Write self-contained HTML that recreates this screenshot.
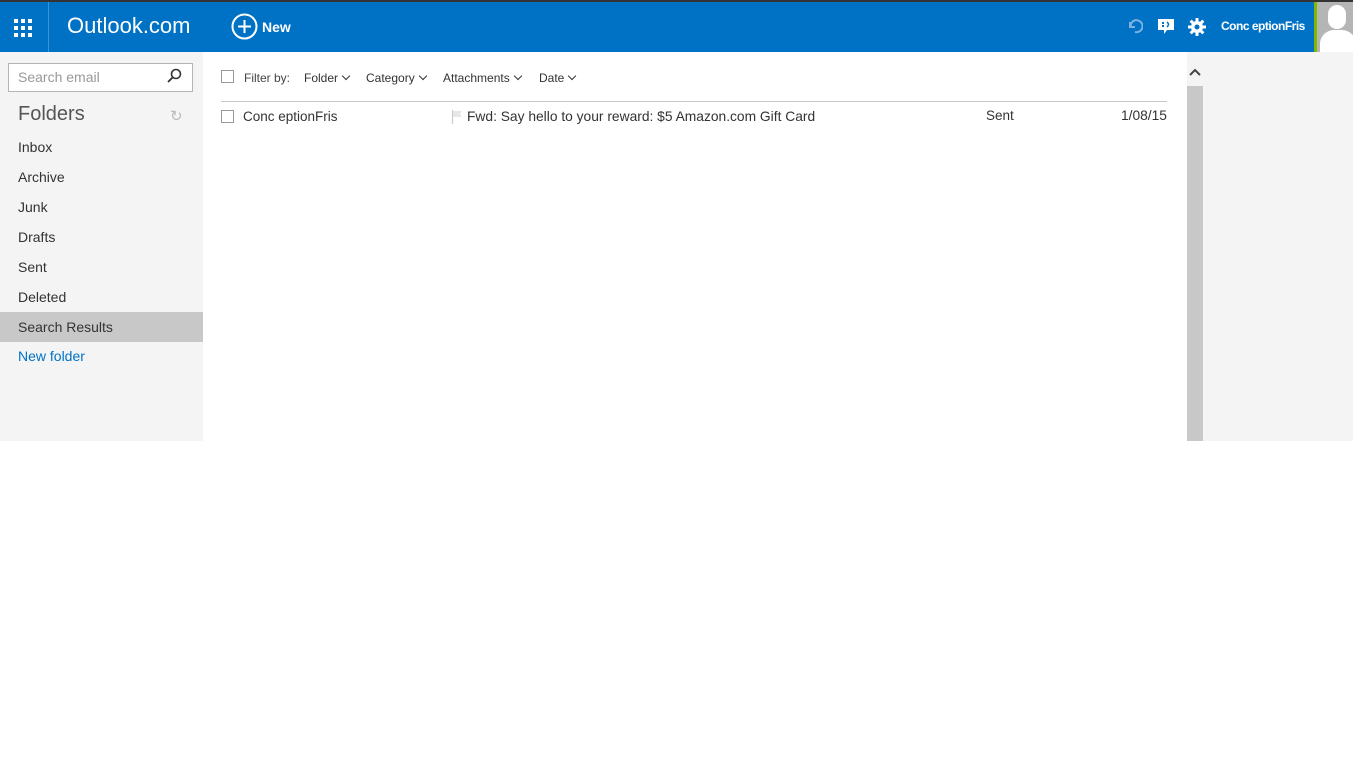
<!DOCTYPE html>
<html><head><style>
*{margin:0;padding:0;box-sizing:border-box}
body{width:1366px;height:768px;background:#fff;font-family:"Liberation Sans",sans-serif;position:relative;overflow:hidden;color:#333}
.a{position:absolute}
.top{left:0;top:0;width:1353px;height:2px;background:#333}
.bar{left:0;top:2px;width:1314px;height:50px;background:#0072c6}
.side{left:0;top:52px;width:203px;height:389px;background:#f4f4f4}
.right{left:1203px;top:52px;width:150px;height:389px;background:#f4f4f4}
.scroll{left:1187px;top:86px;width:16px;height:355px;background:#c8c8c8}
.fl{left:18px;font-size:14px;color:#333}
.ck{width:13px;height:13px;border:1px solid #999;background:#fff}
.dd{font-size:12px;color:#333;top:71px}
.dd:after{content:"";display:inline-block;width:5px;height:5px;border-right:1.5px solid #333;border-bottom:1.5px solid #333;transform:rotate(45deg);margin-left:5px;position:relative;top:-3px}
</style></head><body>
<div class="a top"></div>
<div class="a bar"></div>
<div class="a" style="left:14px;top:19px;width:18px;height:18px">
<svg width="18" height="18" fill="#fff"><rect x="0" y="0" width="4" height="4"/><rect x="7" y="0" width="4" height="4"/><rect x="14" y="0" width="4" height="4"/><rect x="0" y="7" width="4" height="4"/><rect x="7" y="7" width="4" height="4"/><rect x="14" y="7" width="4" height="4"/><rect x="0" y="14" width="4" height="4"/><rect x="7" y="14" width="4" height="4"/><rect x="14" y="14" width="4" height="4"/></svg></div>
<div class="a" style="left:48px;top:2px;width:1px;height:50px;background:#3a94d8"></div>
<div class="a" style="left:67px;top:13px;font-size:22px;color:#fff">Outlook.com</div>
<svg class="a" style="left:231px;top:13px" width="27" height="27"><circle cx="13.5" cy="13.5" r="12" fill="none" stroke="#fff" stroke-width="2"/><path d="M13.5 7v13M7 13.5h13" stroke="#fff" stroke-width="2"/></svg>
<div class="a" style="left:262px;top:19px;font-size:14px;font-weight:bold;color:#fff">New</div>
<svg class="a" style="left:1127px;top:18px" width="16" height="16"><path d="M3 4v5h5M3.5 8.5A6 6 0 1 1 8 14" fill="none" stroke="#7fb1e0" stroke-width="2"/></svg>
<svg class="a" style="left:1157px;top:18px" width="18" height="18"><path d="M1 1h16v11H10l-3 4v-4H1z" fill="#fff"/><rect x="5" y="4" width="2" height="2" fill="#0072c6"/><rect x="5" y="7" width="2" height="2" fill="#0072c6"/><path d="M10 4q3 2.5 0 5" stroke="#0072c6" fill="none" stroke-width="1.5"/></svg>
<svg class="a" style="left:1188px;top:18px" width="18" height="18" viewBox="0 0 18 18"><g fill="#fff"><circle cx="9" cy="9" r="6"/><rect x="7.5" y="0" width="3" height="18"/><rect x="0" y="7.5" width="18" height="3"/><rect x="7.5" y="0" width="3" height="18" transform="rotate(45 9 9)"/><rect x="7.5" y="0" width="3" height="18" transform="rotate(-45 9 9)"/></g><circle cx="9" cy="9" r="2.5" fill="#0072c6"/></svg>
<div class="a" style="left:1221px;top:19px;font-size:12px;font-weight:bold;color:#fff;letter-spacing:-0.5px">Conc eptionFris</div>
<div class="a" style="left:1314px;top:2px;width:3px;height:50px;background:#7fba00"></div>
<div class="a" style="left:1317px;top:2px;width:36px;height:50px;background:#b5b5b5;overflow:hidden">
<div class="a" style="left:11px;top:3px;width:18px;height:24px;border-radius:9px;background:#fff"></div>
<div class="a" style="left:3px;top:28px;width:36px;height:30px;border-radius:14px 14px 0 0;background:#fff"></div></div>
<div class="a side"></div>
<div class="a" style="left:8px;top:63px;width:185px;height:29px;border:1px solid #b5b5b5;background:#fff"></div>
<div class="a" style="left:18px;top:69px;font-size:14px;color:#999">Search email</div>
<svg class="a" style="left:166px;top:68px" width="16" height="16"><circle cx="10" cy="6" r="4.5" fill="none" stroke="#333" stroke-width="1.6"/><path d="M6.8 9.2L2 14" stroke="#333" stroke-width="1.8"/></svg>
<div class="a" style="left:18px;top:103px;font-size:20px;color:#555">Folders</div>
<div class="a" style="left:170px;top:107px;font-size:15px;color:#bbb">↻</div>
<div class="a fl" style="top:139px">Inbox</div>
<div class="a fl" style="top:169px">Archive</div>
<div class="a fl" style="top:199px">Junk</div>
<div class="a fl" style="top:229px">Drafts</div>
<div class="a fl" style="top:259px">Sent</div>
<div class="a fl" style="top:289px">Deleted</div>
<div class="a" style="left:0;top:312px;width:203px;height:30px;background:#c8c8c8"></div>
<div class="a fl" style="top:319px">Search Results</div>
<div class="a fl" style="top:348px;color:#0072c6">New folder</div>
<div class="a ck" style="left:221px;top:70px"></div>
<div class="a" style="left:244px;top:71px;font-size:12px;color:#444">Filter by:</div>
<div class="a dd" style="left:304px">Folder</div>
<div class="a dd" style="left:366px">Category</div>
<div class="a dd" style="left:443px">Attachments</div>
<div class="a dd" style="left:539px">Date</div>
<div class="a" style="left:221px;top:101px;width:946px;height:1px;background:#c8c8c8"></div>
<div class="a ck" style="left:221px;top:110px"></div>
<div class="a" style="left:243px;top:109px;font-size:13.5px">Conc eptionFris</div>
<svg class="a" style="left:451px;top:110px" width="12" height="14"><path d="M1.5 0v14" stroke="#ccc" stroke-width="1.2"/><path d="M2 1h9l-2 3 2 3H2z" fill="#e6e6e6"/></svg>
<div class="a" style="left:467px;top:109px;font-size:13.8px">Fwd: Say hello to your reward: $5 Amazon.com Gift Card</div>
<div class="a" style="left:986px;top:108px;font-size:13.5px">Sent</div>
<div class="a" style="left:1067px;width:100px;text-align:right;top:108px;font-size:13.8px">1/08/15</div>
<div class="a right"></div>
<div class="a" style="left:1187px;top:52px;width:16px;height:34px;background:#f4f4f4"></div>
<svg class="a" style="left:1189px;top:68px" width="12" height="10"><path d="M1 7l5-5 5 5" fill="none" stroke="#444" stroke-width="2"/></svg>
<div class="a scroll"></div>
</body></html>
